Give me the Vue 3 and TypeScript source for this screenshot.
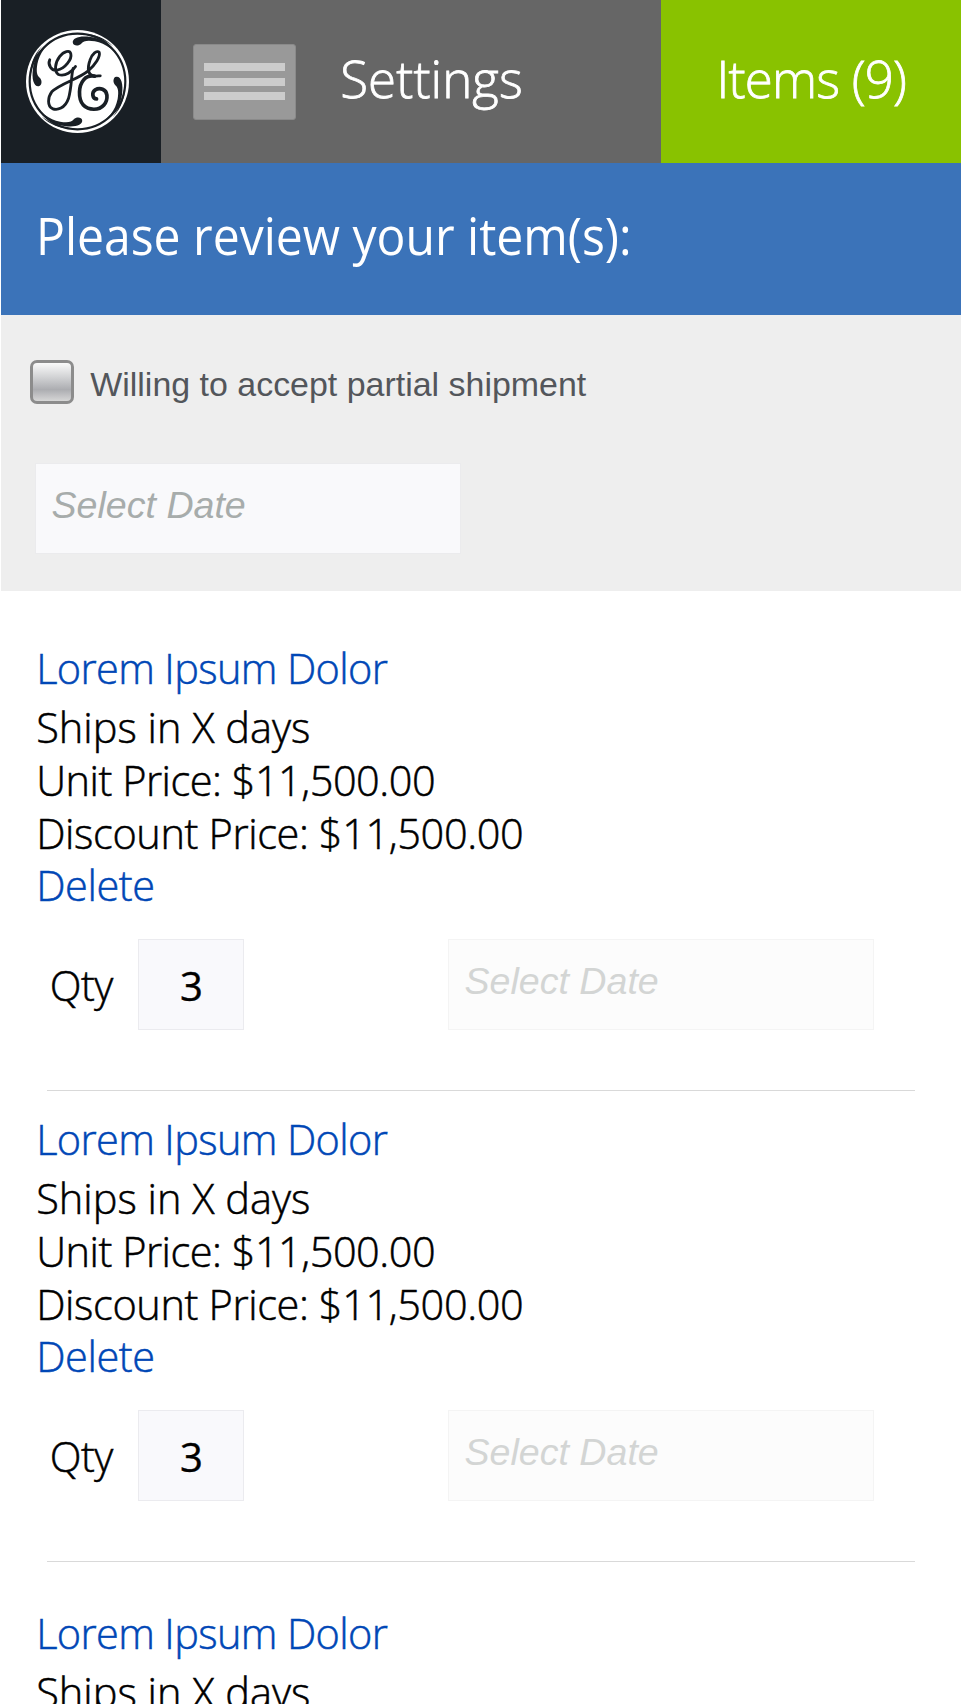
<script setup lang="ts">
import { ref } from 'vue'

interface Item {
  id: number
  name: string
  ships: string
  unitPrice: string
  discountPrice: string
  qty: number
}

const items = ref<Item[]>(
  [1, 2, 3].map((id) => ({
    id,
    name: 'Lorem Ipsum Dolor',
    ships: 'Ships in X days',
    unitPrice: '$11,500.00',
    discountPrice: '$11,500.00',
    qty: 3,
  })),
)
const itemCount = ref(9)
const partial = ref(false)

// The four swooshes of the emblem are quarter turns of one shape.
const turns = [0, 90, 180, 270]

function remove(id: number) {
  items.value = items.value.filter((i) => i.id !== id)
}
</script>

<template>
  <div class="page">
    <header class="topbar">
      <div class="brand">
        <svg class="logo" viewBox="79 91 308 308" aria-label="GE">
          <circle cx="233" cy="245" r="154" fill="#fff" />
          <circle cx="233" cy="245" r="143" fill="none" stroke="#191f25" stroke-width="6.5" />
          <path
            v-for="t in turns"
            :key="t"
            :transform="`rotate(${t} 233 245)`"
            d="M219 129 C217 115 240 107 272 112 C302 116 340 134 366 190 C345 150 318 132 285 125 C262 121 250 124 244 132 C237 140 220 139 219 129Z M240 104 C275 100 312 112 340 140 C312 118 280 108 240 104Z"
            fill="#191f25"
          />
          <g fill="none" stroke="#191f25" stroke-linecap="round" stroke-linejoin="round">
            <path
              stroke-width="8.5"
              d="M150 180 C143 196 156 214 172 211 C196 207 217 178 213 162 C210 150 192 154 180 170 C166 188 162 216 176 224 C196 232 218 214 227 200"
            />
            <path
              stroke-width="8.5"
              d="M220 206 C214 226 216 262 206 296 C196 326 172 332 158 326 C142 318 144 292 156 276 C180 252 235 238 264 214 C286 196 302 170 298 158 C292 150 276 162 270 182 C262 206 264 224 280 228 C288 230 296 228 301 228"
            />
            <path
              stroke-width="11"
              d="M284 229 C256 224 240 248 239 276 C238 312 256 328 282 328 C308 328 323 308 321 286 C319 268 300 262 286 270 C274 278 278 297 290 297"
            />
          </g>
        </svg>
      </div>
      <nav class="menu">
        <button class="burger" aria-label="Menu"><i /><i /><i /></button>
        <span class="settings">Settings</span>
      </nav>
      <a class="cart">Items ({{ itemCount }})</a>
    </header>

    <h1 class="banner"><span>Please review your item(s):</span></h1>

    <section class="options">
      <label class="partial">
        <input v-model="partial" type="checkbox" />
        <span>Willing to accept partial shipment</span>
      </label>
      <div class="date">Select Date</div>
    </section>

    <main>
      <article v-for="item in items" :key="item.id" class="item">
        <a class="name">{{ item.name }}</a>
        <p class="ships">{{ item.ships }}</p>
        <p class="unit">Unit Price: {{ item.unitPrice }}</p>
        <p class="discount">Discount Price: {{ item.discountPrice }}</p>
        <a class="delete" @click="remove(item.id)">Delete</a>
        <div class="controls">
          <span class="label">Qty</span>
          <div class="qty">{{ item.qty }}</div>
          <div class="date faded">Select Date</div>
        </div>
      </article>
    </main>
  </div>
</template>

<style>
body {
  margin: 0;
  background: #fff;
}
</style>

<style scoped>
.page {
  box-sizing: border-box;
  width: 961px;
  height: 1704px;
  overflow: hidden;
  background: #fff;
  font-family: 'Open Sans', 'Noto Sans', sans-serif;
  font-weight: 300;
  color: #000;
}
.topbar {
  display: flex;
  height: 163px;
  padding-left: 1px;
}
.brand {
  box-sizing: border-box;
  width: 159.5px;
  padding: 30px 0 0 25.3px;
  background: #191f25;
}
.logo {
  display: block;
  width: 103px;
  height: 103px;
}
.menu {
  display: flex;
  align-items: flex-start;
  width: 500.5px;
  background: #666;
}
.burger {
  box-sizing: border-box;
  display: flex;
  flex-direction: column;
  gap: 6.5px;
  width: 103px;
  height: 76px;
  margin: 44px 0 0 32.5px;
  padding: 18px 10px 0;
  border: 1px solid #8a8a8a;
  border-radius: 3px;
  background: #999;
}
.burger i {
  height: 8px;
  background: #ccc;
}
.settings,
.cart {
  font-size: 51px;
  line-height: 157px;
  color: #fff;
  white-space: nowrap;
  -webkit-text-stroke: 0.8px #fff;
}
.settings {
  margin-left: 44.2px;
  letter-spacing: 0.1px;
}
.cart {
  flex: 1;
  height: 163px;
  padding-left: 55.5px;
  background: #89c200;
  letter-spacing: -0.8px;
}
.banner {
  height: 152px;
  margin: 0 0 0 1px;
  padding-left: 34.7px;
  box-sizing: border-box;
  background: #3b73b9;
  color: #fff;
  font-size: 51px;
  font-weight: 400;
  line-height: 144px;
  white-space: nowrap;
}
.banner span {
  display: inline-block;
  transform: scaleX(0.942);
  transform-origin: left;
}
.options {
  box-sizing: border-box;
  height: 276px;
  margin-left: 1px;
  padding: 45px 0 0 29px;
  background: #eee;
  font-family: 'Liberation Sans', Arial, sans-serif;
  font-weight: 400;
}
.partial {
  display: flex;
  align-items: flex-start;
  color: #53565b;
  font-size: 33.95px;
  line-height: 49px;
}
.partial input {
  appearance: none;
  box-sizing: border-box;
  width: 44px;
  height: 44px;
  margin: 0 16.2px 0 0;
  border: 3px solid #8c8c8c;
  border-radius: 7px;
  background: linear-gradient(#fafafa, #d4d5d7 35%, #acadb1 70%, #d6d6d6);
}
.date {
  box-sizing: border-box;
  width: 426px;
  height: 91px;
  margin: 54px 0 0 5px;
  padding-left: 15.5px;
  border: 1px solid #ebebed;
  background: #f9f9fb;
  color: #a7acab;
  font: italic 400 37.6px/83px 'Liberation Sans', Arial, sans-serif;
}
.item {
  box-sizing: border-box;
  height: 471px;
  padding: 15px 0 0 36.2px;
  background: linear-gradient(#d9d9d9, #d9d9d9) 47px 100% / 868px 1px no-repeat;
  font-size: 41.5px;
  line-height: 53px;
  white-space: nowrap;
  -webkit-text-stroke: 0.5px currentColor;
}
.item:first-child {
  height: 500px;
  padding-top: 44px;
}
.item:nth-child(3) {
  padding-top: 38px;
}
p {
  margin: 0;
}
.name,
.delete {
  display: block;
  color: #0047b6;
}
.name {
  line-height: 66px;
  letter-spacing: -0.64px;
}
.unit {
  letter-spacing: -0.49px;
}
.discount {
  letter-spacing: -0.38px;
}
.delete {
  line-height: 51px;
  letter-spacing: -0.4px;
}
.controls {
  display: flex;
  margin-top: 28px;
  -webkit-text-stroke: 0;
}
.label {
  width: 88.3px;
  margin-left: 13.5px;
  line-height: 93px;
  letter-spacing: -0.5px;
  -webkit-text-stroke: 0.5px currentColor;
}
.qty {
  box-sizing: border-box;
  width: 106px;
  height: 91px;
  padding-left: 1px;
  border: 1px solid #ebebef;
  background: #f9f9fc;
  font-size: 40px;
  font-weight: 400;
  line-height: 91px;
  text-align: center;
  -webkit-text-stroke: 0.4px currentColor;
}
.faded {
  width: 426px;
  margin: 0 0 0 204px;
  padding-left: 15.5px;
  border-color: #f4f4f4;
  background: #fcfcfc;
  color: #d3d5d4;
}
</style>
